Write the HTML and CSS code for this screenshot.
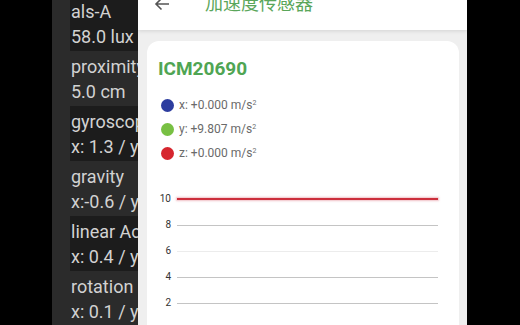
FILE: index.html
```html
<!DOCTYPE html>
<html lang="zh-CN">
<head>
    <meta charset="UTF-8">
    <meta name="viewport" content="width=device-width, initial-scale=1.0">
    <title>加速度传感器</title>
    <link rel="stylesheet" href="styles.css">
</head>
<body>
    <div class="edge"></div>

    <div class="sensor-list">
        <div class="sensor dark"><div>als-A</div><div>58.0 lux</div></div>
        <div class="sensor"><div>proximity</div><div>5.0 cm</div></div>
        <div class="sensor dark"><div>gyroscope</div><div>x: 1.3 / y: 0.2</div></div>
        <div class="sensor"><div>gravity</div><div>x:-0.6 / y: 9.7</div></div>
        <div class="sensor dark"><div>linear Acceleration</div><div>x: 0.4 / y: 0.1</div></div>
        <div class="sensor"><div>rotation</div><div>x: 0.1 / y: 0.0</div></div>
    </div>

    <div class="app">
        <div class="header">
            <svg class="back" width="16" height="14" viewBox="0 0 16 14">
                <path d="M15 7H2M7.5 1.5L2 7l5.5 5.5" fill="none" stroke="#555" stroke-width="1.6"/>
            </svg>
            <span class="title">加速度传感器</span>
        </div>

        <div class="card">
            <h2>ICM20690</h2>

            <div class="legend">
                <div class="item"><span class="dot blue"></span>x: +0.000 m/s<sup>2</sup></div>
                <div class="item"><span class="dot green"></span>y: +9.807 m/s<sup>2</sup></div>
                <div class="item"><span class="dot red"></span>z: +0.000 m/s<sup>2</sup></div>
            </div>

            <div class="chart">
                <div class="row"><span class="tick">10</span><span class="line value"></span></div>
                <div class="row"><span class="tick">8</span><span class="line"></span></div>
                <div class="row"><span class="tick">6</span><span class="line faint"></span></div>
                <div class="row"><span class="tick">4</span><span class="line"></span></div>
                <div class="row"><span class="tick">2</span><span class="line"></span></div>
            </div>
        </div>
    </div>

    <div class="edge fill"></div>
</body>
</html>
```

FILE: styles.css
```css
body {
    margin: 0;
    padding: 0;
    display: flex;
    width: 520px;
    height: 325px;
    overflow: hidden;
    background: #000;
    font-family: Roboto, "Noto Sans CJK SC", sans-serif;
}

.edge {
    width: 52px;
    flex-shrink: 0;
    background: #000;
}

.edge.fill {
    flex: 1;
}

.sensor-list {
    width: 86px;
    flex-shrink: 0;
    background: #2b2b2b;
    overflow: hidden;
    margin-top: -4px;
}

.sensor {
    margin-left: 18px;
    padding: 3px 0 2px 1px;
    height: 50px;
    font-size: 18px;
    line-height: 25px;
    color: #d2d2d2;
    white-space: nowrap;
    overflow: hidden;
}

.sensor.dark {
    background: #1c1c1c;
}

.app {
    width: 329px;
    flex-shrink: 0;
    background: #efefef;
    display: flex;
    flex-direction: column;
    overflow: hidden;
}

.header {
    height: 8px;
    padding-bottom: 22px;
    background: #fff;
    display: flex;
    align-items: center;
    box-shadow: 0 1px 4px rgba(0, 0, 0, 0.12);
    position: relative;
    z-index: 1;
}

.back {
    margin-left: 16px;
}

.title {
    margin-left: 35px;
    font-size: 18px;
    line-height: 20px;
    color: #5aa65a;
}

.card {
    margin: 11px 8px 0 9px;
    flex: 1;
    background: #fff;
    border-radius: 12px 12px 0 0;
    padding: 16px 0 0 11px;
}

.card h2 {
    margin: 0;
    font-size: 19px;
    font-weight: 700;
    color: #4fa553;
    line-height: 24px;
}

.legend {
    margin-top: 17px;
    display: flex;
    flex-direction: column;
    gap: 9px;
}

.legend .item {
    display: flex;
    align-items: center;
    font-size: 12px;
    line-height: 15px;
    color: #6a6a6a;
}

.legend sup {
    font-size: 7px;
    align-self: flex-start;
    margin-top: -2px;
}

.dot {
    width: 13px;
    height: 13px;
    border-radius: 50%;
    margin: 0 5px 0 3px;
}

.dot.blue { background: #2d3d9f; }
.dot.green { background: #78c043; }
.dot.red { background: #d6262e; }

.chart {
    margin-top: 25px;
    display: flex;
    flex-direction: column;
}

.row {
    height: 26px;
    display: flex;
    align-items: center;
}

.tick {
    width: 13px;
    text-align: right;
    font-size: 10px;
    line-height: 12px;
    color: #333;
}

.line {
    margin-left: 6px;
    width: 261px;
    height: 1px;
    background: #c4c4c4;
}

.line.faint {
    background: #ececec;
}

.line.value {
    height: 2px;
    background: #cc2f3c;
    box-shadow: 0 0 2px 1px rgba(230, 150, 160, 0.6);
}
```
